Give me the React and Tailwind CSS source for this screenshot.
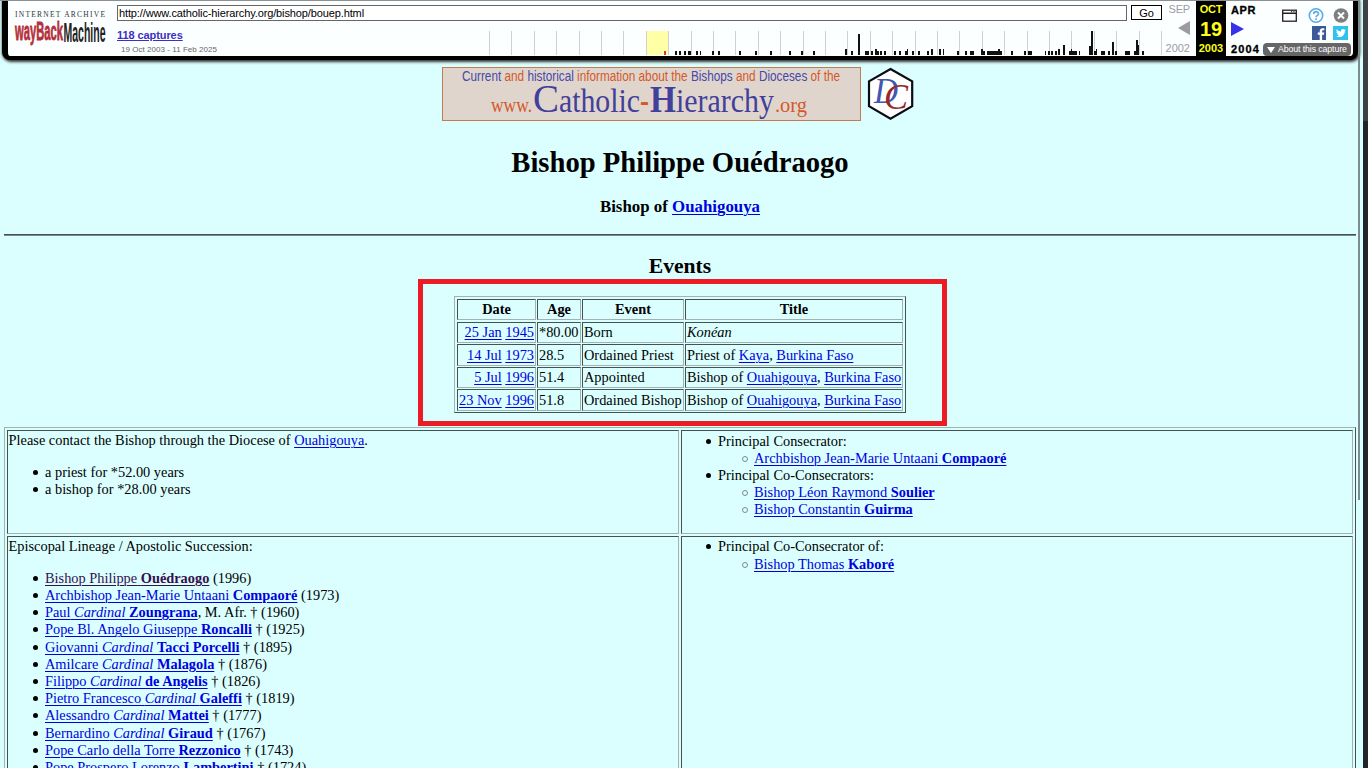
import React from 'react';

// [x, height, width] of each capture bar in the sparkline
const BARS = [
  [675, 4, 2], [679, 4, 2], [684, 4, 2], [688, 4, 3], [696, 4, 2], [700, 4, 1], [712, 4, 2],
  [718, 4, 2], [739, 4, 2], [755, 4, 2], [770, 4, 2], [789, 4, 2], [801, 4, 2], [813, 4, 2],
  [845, 6, 2], [851, 4, 2], [858, 21, 2], [865, 4, 4], [871, 4, 2], [875, 6, 2], [877, 4, 2],
  [880, 4, 2], [884, 4, 2], [894, 4, 2], [899, 4, 2], [905, 4, 2], [907, 6, 1], [912, 4, 2],
  [918, 4, 2], [927, 4, 2], [931, 6, 2], [939, 6, 2], [943, 6, 1], [957, 4, 2], [965, 4, 2],
  [970, 4, 4], [981, 6, 2], [983, 4, 2], [987, 4, 15], [998, 6, 2], [1011, 4, 2], [1024, 4, 2],
  [1028, 4, 4], [1045, 4, 1], [1048, 4, 2], [1051, 4, 2], [1055, 4, 2], [1058, 6, 2],
  [1063, 10, 2], [1069, 4, 4], [1071, 6, 1], [1073, 4, 4], [1079, 4, 1], [1089, 9, 3],
  [1091, 24, 2], [1094, 4, 2], [1096, 6, 1], [1101, 4, 4], [1108, 4, 2], [1112, 13, 2],
  [1115, 4, 2], [1125, 4, 5], [1134, 4, 2], [1136, 15, 2], [1138, 10, 1], [1142, 4, 2],
];

const TICKS = Array.from({ length: 31 }, (_, i) => 489 + Math.round(i * 22.4));

const LINEAGE = [
  { name: 'Bishop Philippe', last: 'Ouédraogo', after: ' (1996)', visited: true },
  { name: 'Archbishop Jean-Marie Untaani', last: 'Compaoré', after: ' (1973)' },
  { name: 'Paul', cardinal: true, last: 'Zoungrana', after: ', M. Afr. † (1960)' },
  { name: 'Pope Bl. Angelo Giuseppe', last: 'Roncalli', after: ' † (1925)' },
  { name: 'Giovanni', cardinal: true, last: 'Tacci Porcelli', after: ' † (1895)' },
  { name: 'Amilcare', cardinal: true, last: 'Malagola', after: ' † (1876)' },
  { name: 'Filippo', cardinal: true, last: 'de Angelis', after: ' † (1826)' },
  { name: 'Pietro Francesco', cardinal: true, last: 'Galeffi', after: ' † (1819)' },
  { name: 'Alessandro', cardinal: true, last: 'Mattei', after: ' † (1777)' },
  { name: 'Bernardino', cardinal: true, last: 'Giraud', after: ' † (1767)' },
  { name: 'Pope Carlo della Torre', last: 'Rezzonico', after: ' † (1743)' },
  { name: 'Pope Prospero Lorenzo', last: 'Lambertini', after: ' † (1724)' },
];

const EVENTS = [
  { day: '25 Jan', year: '1945', age: '*80.00', event: 'Born', title: <i>Konéan</i>, row: 'h-5 mb-0.5 leading-[19px]' },
  {
    day: '14 Jul', year: '1973', age: '28.5', event: 'Ordained Priest', row: 'h-[21px] mb-0.5 leading-[20px]',
    title: <>Priest of <Link>Kaya</Link>, <Link>Burkina Faso</Link></>,
  },
  {
    day: '5 Jul', year: '1996', age: '51.4', event: 'Appointed', row: 'h-[21px] mb-px leading-[19px]',
    title: <>Bishop of <Link>Ouahigouya</Link>, <Link>Burkina Faso</Link></>,
  },
  {
    day: '23 Nov', year: '1996', age: '51.8', event: 'Ordained Bishop', row: 'h-[21px] leading-[20px]',
    title: <>Bishop of <Link>Ouahigouya</Link>, <Link>Burkina Faso</Link></>,
  },
];

function Link({ children, visited }) {
  return (
    <a
      className={`underline underline-offset-2 decoration-1 ${visited ? 'text-[#35104e]' : 'text-[#0000de]'}`}
      href="#"
    >
      {children}
    </a>
  );
}

function Person({ name, last, cardinal, visited }) {
  return (
    <Link visited={visited}>
      {name} {cardinal && <i>Cardinal </i>}<b>{last}</b>
    </Link>
  );
}

// List items with a solid or hollow bullet hanging left of the text
function Item({ children }) {
  return (
    <li className="before:inline-block before:size-[5px] before:rounded-full before:bg-black before:-ml-3 before:mr-[7px] before:align-[2px]">
      {children}
    </li>
  );
}

function SubItem({ children }) {
  return (
    <li className="before:inline-block before:size-[6px] before:rounded-full before:border before:border-[#7b8c8c] before:-ml-3 before:mr-[6px] before:align-[1px]">
      {children}
    </li>
  );
}

// Sunken cell of an old style bordered table
function Cell({ className = '', children }) {
  return (
    <div className={`border border-t-[#465151] border-l-[#465151] border-r-[#a3b1b1] border-b-[#a3b1b1] ${className}`}>
      {children}
    </div>
  );
}

function WaybackLogo() {
  return (
    <svg className="w-[96px] h-[44px]" viewBox="13 8 96 44">
      <text x="15" y="17" fontFamily="Liberation Serif" fontSize="7.5" fill="#333" textLength="90">INTERNET ARCHIVE</text>
      <text y="40" fontFamily="Liberation Sans" fontWeight="bold" fontSize="25">
        <tspan x="15" fill="#b52f3b" stroke="#b52f3b" strokeWidth="0.8" textLength="48" lengthAdjust="spacingAndGlyphs">wayBack</tspan>
        <tspan x="63.5" y="42" fill="#222" fontSize="28" textLength="42" lengthAdjust="spacingAndGlyphs">Machine</tspan>
      </text>
    </svg>
  );
}

function Sparkline() {
  return (
    <svg className="w-[675px] h-[25px] mt-px" viewBox="488 31 675 25" shapeRendering="crispEdges">
      <rect x="646" y="31" width="23" height="24" fill="#ffffa5" />
      {TICKS.map((x) => (
        <rect key={x} x={x} y="31" width="1" height="24" fill="#d0d0d0" />
      ))}
      <rect x="664" y="51" width="2" height="4" fill="#e0304f" />
      {BARS.map(([x, h, w]) => (
        <rect key={`${x}-${h}`} x={x} y={55 - h} width={w} height={h} fill="#111" />
      ))}
    </svg>
  );
}

function ToolbarIcons() {
  return (
    <svg className="w-[88px] h-[36px]" viewBox="1263 6 88 36">
      <rect x="1282.7" y="10.2" width="13.6" height="11" fill="#fff" stroke="#222" strokeWidth="1.3" />
      <path d="M1282.5 13.2h14" stroke="#222" strokeWidth="1.5" />
      <path d="M1291 11.6h1.2M1293.3 11.6h1.2" stroke="#222" strokeWidth="1" />
      <circle cx="1316" cy="15.5" r="6.7" fill="#fff" stroke="#56ace4" strokeWidth="1.6" />
      <path d="M1313.7 14c0-3.2 4.8-3 4.8-.3 0 1.8-2.4 1.7-2.4 3.6M1316.1 18.3v1.6" fill="none" stroke="#56ace4" strokeWidth="1.6" />
      <circle cx="1341" cy="15.5" r="7.3" fill="#7f7f7f" />
      <path d="M1338 12.5l6 6M1344 12.5l-6 6" stroke="#fff" strokeWidth="2" />
      <rect x="1312" y="26" width="14" height="14" fill="#3b5998" />
      <path d="M1319.7 40v-5.2h-1.9v-2.2h1.9v-1.4c0-2 1.2-3 3-3h1.6v2.1h-1.1c-.9 0-1.1.4-1.1 1.1v1.2h2.1l-.3 2.2h-1.8v5.2z" fill="#fff" />
      <rect x="1333" y="26" width="15" height="14" fill="#2fc2ef" />
      <path d="M1346 29.9c-.4.2-.8.3-1.2.4.4-.3.8-.7.9-1.1-.4.2-.9.4-1.3.5-1.4-1.5-3.8-.4-3.5 1.7-1.7-.1-3.2-.9-4.2-2.2-.6 1-.3 2.2.6 2.8-.3 0-.7-.1-.9-.3 0 1 .7 1.9 1.6 2.1-.3.1-.6.1-.9 0 .3.8 1 1.4 1.9 1.4-.9.7-2 1-3 .9 4.1 2.6 8.9-.2 8.9-5.2.4-.3.8-.6 1.1-1z" fill="#fff" />
    </svg>
  );
}

function Toolbar() {
  return (
    <div className="ml-[2px] w-[1356px] h-[60px] border-l-[6px] border-b-4 border-r-[5px] border-black rounded-b-lg bg-[#fbffff] shadow-[1px_1px_3px_1px_#333] flex pt-px font-['Liberation_Sans',sans-serif] text-black overflow-hidden">
      <div className="w-[109px] shrink-0 pl-[5px] pt-[7px]">
        <WaybackLogo />
      </div>
      <div className="w-[1046px] shrink-0 pt-1">
        <div className="flex gap-1">
          <div className="w-[1010px] h-4 border border-[#666] bg-white pl-[1px] text-[11px] leading-[15px] tracking-[-0.12px] whitespace-nowrap">
            http://www.catholic-hierarchy.org/bishop/bouep.html
          </div>
          <div className="w-[31px] h-[15px] border border-black bg-white text-center text-[11px] leading-[14px]">Go</div>
        </div>
        <div className="flex pt-[9px]">
          <div className="w-[371px] shrink-0 -mt-px">
            <div className="text-[11px] leading-[12px] tracking-[-0.08px] font-bold underline text-[#3c30c4]">118 captures</div>
            <div className="pl-1 pt-1 text-[8px] leading-[9px] tracking-[0.04px] text-[#666] whitespace-nowrap">19 Oct 2003 - 11 Feb 2025</div>
          </div>
          <Sparkline />
        </div>
      </div>
      <div className="w-[33px] shrink-0 flex flex-col items-end pr-1.5 text-[11px] text-[#9b9ba5]">
        <div className="leading-[17px] h-5 tracking-[-0.2px]">SEP</div>
        <div className="h-5 text-right">
          <svg className="w-3 h-[14px]" viewBox="0 0 12 14"><path d="M12 0v14L0 7z" fill="#9c9ca0" /></svg>
        </div>
        <div className="leading-[15px]">2002</div>
      </div>
      <div className="w-[30px] shrink-0 flex flex-col items-center bg-black -mt-px pt-px font-bold text-[#ffff18]">
        <div className="text-[11px] leading-[17px] h-4 tracking-[-0.3px]">OCT</div>
        <div className="text-[20px] leading-6 h-6">19</div>
        <div className="text-[11px] leading-[15px]">2003</div>
      </div>
      <div className="w-[37px] shrink-0 pl-[5px] font-bold text-[11px]">
        <div className="leading-[18px] h-5 tracking-[0.6px] [-webkit-text-stroke:0.3px_black]">APR</div>
        <svg className="w-[13px] h-5" viewBox="0 0 13 20"><path d="M0 1v14l13-7z" fill="#3632e8" /></svg>
        <div className="leading-[16px] tracking-[1.1px] [-webkit-text-stroke:0.3px_black]">2004</div>
      </div>
      <div className="w-[88px] shrink-0 pt-[5px]">
        <ToolbarIcons />
        <div className="mt-[1px] h-[13px] w-[88px] rounded bg-[#666] flex items-center pt-px pl-1 gap-[3px] text-[8.8px] tracking-[-0.12px] text-white whitespace-nowrap">
          <svg className="w-2 h-[6px] shrink-0" viewBox="0 0 8 6"><path d="M0 0h8l-4 6z" fill="#fff" /></svg>
          About this capture
        </div>
      </div>
    </div>
  );
}

function Banner() {
  return (
    <div className="mt-[7px] ml-[438px] flex gap-1.5 h-[54px]">
      <svg className="w-[419px] h-[54px] border border-[#c07d52] bg-[#e0d5cd]" viewBox="443 68 417 52">
        <text x="462" y="80.5" fontFamily="Liberation Sans" fontSize="14" fill="#d2592b" textLength="378" lengthAdjust="spacingAndGlyphs">
          <tspan fill="#4548a6">Current</tspan> and <tspan fill="#4548a6">historical</tspan> information about the{' '}
          <tspan fill="#4548a6">Bishops</tspan> and <tspan fill="#4548a6">Dioceses</tspan> of the
        </text>
        <text y="112" fontFamily="Liberation Serif" fontSize="33" fill="#41409a">
          <tspan x="491" fontSize="22" fill="#d2592b" textLength="41" lengthAdjust="spacingAndGlyphs">www.</tspan>
          <tspan x="533" fontSize="39" textLength="26" lengthAdjust="spacingAndGlyphs">C</tspan>
          <tspan x="559" textLength="81" lengthAdjust="spacingAndGlyphs">atholic</tspan>
          <tspan x="640" fontWeight="bold" fill="#d2592b" textLength="9" lengthAdjust="spacingAndGlyphs">-</tspan>
          <tspan x="650" fontSize="38" fontWeight="bold" textLength="26" lengthAdjust="spacingAndGlyphs">H</tspan>
          <tspan x="676" textLength="98" lengthAdjust="spacingAndGlyphs">ierarchy</tspan>
          <tspan x="775" fontSize="22" fill="#d2592b" textLength="32" lengthAdjust="spacingAndGlyphs">.org</tspan>
        </text>
      </svg>
      <svg className="w-[48px] h-[54px]" viewBox="867 67 48 54">
        <path d="M890.5 69l21.7 12.4v24.8L890.5 118.8 869 106.2V81.4z" fill="#fff" stroke="#0b0b12" strokeWidth="2.2" />
        <text fontFamily="Liberation Serif" fontStyle="italic" fontSize="36">
          <tspan x="874" y="103" fill="#4257b0" textLength="24" lengthAdjust="spacingAndGlyphs">D</tspan>
          <tspan x="884" y="108.5" fill="#96282c" textLength="24" lengthAdjust="spacingAndGlyphs">C</tspan>
        </text>
      </svg>
    </div>
  );
}

function EventsTable() {
  const cols = 'grid grid-cols-[79px_44px_102px_218px] gap-px whitespace-nowrap';
  return (
    <div className="mx-auto w-[452px] h-[117px] border border-t-[#a3b1b1] border-l-[#a3b1b1] border-r-[#465151] border-b-[#465151] p-0.5">
      <div className={`${cols} h-[21px] mb-0.5 leading-[19px] text-center font-bold`}>
        <Cell>Date</Cell>
        <Cell>Age</Cell>
        <Cell>Event</Cell>
        <Cell>Title</Cell>
      </div>
      {EVENTS.map((e) => (
        <div key={e.day} className={`${cols} ${e.row}`}>
          <Cell className="text-right pr-px"><Link>{e.day}</Link> <Link>{e.year}</Link></Cell>
          <Cell className="pl-px">{e.age}</Cell>
          <Cell className="pl-px">{e.event}</Cell>
          <Cell className="pl-px">{e.title}</Cell>
        </div>
      ))}
    </div>
  );
}

function Details() {
  return (
    <div className="mt-px w-[1352px] h-[600px] border border-t-[#a3b1b1] border-l-[#a3b1b1] border-r-[#465151] border-b-[#465151] p-0.5 grid grid-cols-[672px_672px] grid-rows-[104px_500px] gap-0.5 leading-[17.1px]">
      <Cell className="pl-[0.6px] pt-px">
        <p>Please contact the Bishop through the Diocese of <Link>Ouahigouya</Link>.</p>
        <ul className="pl-[36.4px] mt-[15px]">
          <Item>a priest for *52.00 years</Item>
          <Item>a bishop for *28.00 years</Item>
        </ul>
      </Cell>
      <Cell className="pt-[2px]">
        <ul className="pl-9">
          <Item>
            Principal Consecrator:
            <ul className="pl-9">
              <SubItem><Person name="Archbishop Jean-Marie Untaani" last="Compaoré" /></SubItem>
            </ul>
          </Item>
          <Item>
            Principal Co-Consecrators:
            <ul className="pl-9">
              <SubItem><Person name="Bishop Léon Raymond" last="Soulier" /></SubItem>
              <SubItem><Person name="Bishop Constantin" last="Guirma" /></SubItem>
            </ul>
          </Item>
        </ul>
      </Cell>
      <Cell className="pl-[0.6px] pt-px">
        <p>Episcopal Lineage / Apostolic Succession:</p>
        <ul className="pl-[36.4px] mt-[14.7px] leading-[17.2px]">
          {LINEAGE.map((p) => (
            <Item key={p.last}><Person {...p} />{p.after}</Item>
          ))}
        </ul>
      </Cell>
      <Cell className="pt-px">
        <ul className="pl-9">
          <Item>
            Principal Co-Consecrator of:
            <ul className="pl-9 pt-px">
              <SubItem><Person name="Bishop Thomas" last="Kaboré" /></SubItem>
            </ul>
          </Item>
        </ul>
      </Cell>
    </div>
  );
}

export default function App() {
  return (
    <div className="relative flex w-[1368px] h-[768px] overflow-hidden bg-[#dbffff] font-['Liberation_Serif',serif] text-[14.36px] text-black">
      <div className="w-[1363px] shrink-0">
        <Toolbar />
        <div className="pl-1 w-[1356px]">
          <Banner />
          <h1 className="mt-[24px] h-[34px] mb-[18px] text-center text-[28.65px] leading-[34px] font-bold">Bishop Philippe Ouédraogo</h1>
          <h3 className="h-5 text-center text-[16.85px] leading-5 font-bold">
            Bishop of <Link>Ouahigouya</Link>
          </h3>
          <hr className="mt-[17px] h-0.5 border-0 border-t border-b border-t-[#465151] border-b-[#7c8888]" />
          <h2 className="mt-[18px] h-[25px] text-center text-[21.6px] leading-[25px] font-bold">Events</h2>
          <div className="ml-[414px] w-[529px] h-[147px] border-[5px] border-[#ec1c24] pt-3 pr-[5px]">
            <EventsTable />
          </div>
          <Details />
        </div>
      </div>
      <div className="w-[5px] shrink-0 bg-[#222529]">
        <div className="h-[121px] bg-[#3c4146]" />
      </div>
      {/* scroll indicator over the right edge */}
      <div className="absolute top-0 left-[1358px] w-[2px] h-[500px] bg-[#7f8c8e]" />
      <div className="absolute top-0 left-0 w-[1358px] h-px bg-[#8e8e93]" />
    </div>
  );
}
